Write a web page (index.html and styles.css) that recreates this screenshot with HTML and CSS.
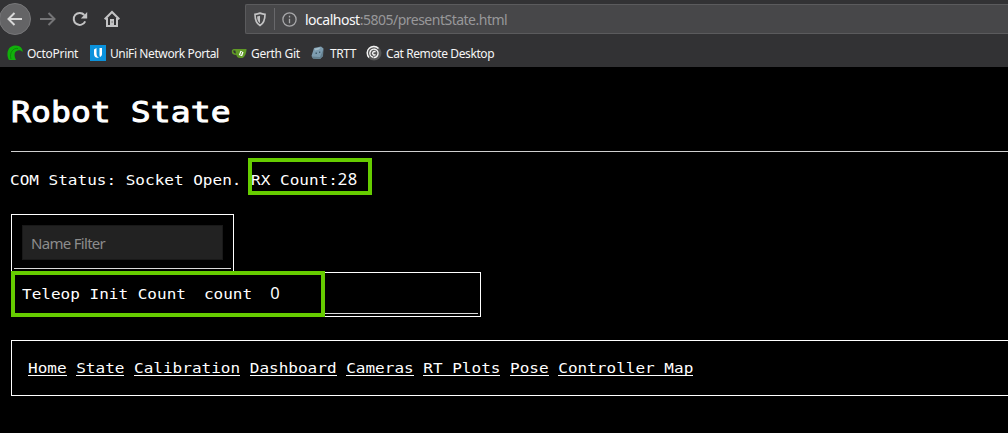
FILE: index.html
```html
<!DOCTYPE html>
<html lang="en">
<head>
<meta charset="utf-8">
<title>Robot State</title>
<link rel="stylesheet" href="styles.css">
</head>
<body>
<header class="browser">
  <div class="toolbar">
    <span class="back"><svg width="18" height="18" viewBox="0 0 18 18"><path d="M16 9H3M8.500 3 2.500 9l6 6"/></svg></span>
    <svg class="forward" width="18" height="18" viewBox="0 0 18 18"><path d="M1 9h14M9.500 3l6 6-6 6"/></svg>
    <svg class="reload" width="18" height="18" viewBox="0 0 18 18"><path d="M14.200 11.400A6 6 0 1 1 13.300 5"/><path class="solid" d="M16.200 2v6.400H9.800z"/></svg>
    <svg class="home" width="18" height="18" viewBox="0 0 18 18"><path d="M1.700 9.200 9 2l7.300 7.200M4 8v8h10V8"/><path class="solid" d="M7 9h4v6H7z"/><path class="knob" d="M8.600 11.500h1v1h-1z"/></svg>
    <div class="address">
      <svg class="shield" width="14" height="15" viewBox="0 0 14 15"><path d="M7 1.100c2 .7 3.500 1 5 1.200C12 8 10.700 11.500 7 13.500 3.300 11.500 2 8 2 2.300 3.500 2.100 5 1.800 7 1.100z"/><path class="solid" d="M7 3.700v7.500C4.900 9.700 4.200 7.600 4.100 4.400z"/></svg>
      <span class="divider"></span>
      <svg class="info" width="15" height="15" viewBox="0 0 15 15"><circle cx="7.500" cy="7.500" r="6.600"/><path d="M7.500 6.700v4.600M7.500 3.700v1.700"/></svg>
      <span class="url"><b>localhost</b>:5805/presentState.html</span>
    </div>
  </div>
  <nav class="bookmarks">
    <span class="mark octo"><svg width="16" height="16" viewBox="0 0 16 16"><path fill="#11b00b" d="M2 15C-1 10 0 1 8 .5c5-.3 8 3 7.600 6.500C14 5 11.500 4.700 9.500 6 7 7.600 7 11 9 15z"/><path fill="none" stroke="#0b8a08" d="M4 14C2 8 6 2.500 11 3.500"/></svg><span>OctoPrint</span></span>
    <span class="mark unifi"><svg width="16" height="16" viewBox="0 0 16 16"><path fill="#0b92dc" d="M0 0h16v16H0z"/><path fill="#fff" d="M4 4.500 6.500 3v5c0 3 1 4 2.500 4.500C6 13.500 4 11.500 4 9zM9.500 3H12v6c0 1.500-.7 2.500-2 2.900-.4-.6-.5-1.300-.5-2.200z"/></svg><span>UniFi Network Portal</span></span>
    <span class="mark gerth"><svg width="16" height="16" viewBox="0 0 16 16"><path fill="#609926" d="M4 4h11.500c0 4-1.500 8-4 9H8c-1.500-.5-2.200-1.500-2.700-3C2 10 .5 8.500.8 6 1 4.500 2 4 4 4z"/><path fill="#323234" d="M2.300 5.500h2l.7 3C3 8.300 2 7 2.300 5.500z"/><path fill="#fff" d="m9.500 5.800 3 1.500-1.400 4-3.300-1.300z"/><path stroke="#609926" d="m10.700 7-1 3"/></svg><span>Gerth Git</span></span>
    <span class="mark trtt"><svg width="16" height="16" viewBox="0 0 16 16"><path fill="#7d9caf" d="m4 3 7-1.500 2.500 2L13 11l-3 3-7-.5L1.500 11z"/><path fill="#64808f" d="M2 11.500 10 12l3-7v6l-3 3-7-.5z"/><path fill="#a3bdca" d="m4.500 3.500 6-1-1.500 2-4 1z"/><path fill="#415d6c" d="M5.500 7.500H7V9H5.500zM9 6.500h1.300V8H9z"/></svg><span>TRTT</span></span>
    <span class="mark cat"><svg width="16" height="16" viewBox="0 0 16 16"><circle cx="8" cy="8" r="7.500" fill="#555"/><g fill="none" stroke="#f4f4f4" stroke-width="1.400"><path d="M3 12.500A6.300 6.300 0 1 1 12.500 3.500"/><path d="M7 12.300A4.100 4.100 0 1 1 12 9c-.7 2.800-2.500 3.800-4.500 3.500"/><path d="M9.500 7A1.700 1.700 0 1 0 9.500 9.500"/></g></svg><span>Cat Remote Desktop</span></span>
  </nav>
</header>
<main class="page">
  <h1 class="title"><span class="wide">Robot State</span></h1>
  <p class="status"><span class="wide">COM Status: Socket Open. RX Count:</span><span class="number">28</span></p>
  <section class="filter"><div class="line"><input class="name" type="text" placeholder="Name Filter"></div></section>
  <section class="signal"><div class="line"><span class="wide">Teleop Init Count</span><span class="wide unit">count</span><span class="number">0</span></div></section>
  <nav class="links"><a href="#"><span class="wide">Home</span></a><a href="#"><span class="wide">State</span></a><a href="#"><span class="wide">Calibration</span></a><a href="#"><span class="wide">Dashboard</span></a><a href="#"><span class="wide">Cameras</span></a><a href="#"><span class="wide">RT Plots</span></a><a href="#"><span class="wide">Pose</span></a><a href="#"><span class="wide">Controller Map</span></a></nav>
</main>
<div class="highlight rx"></div>
<div class="highlight teleop"></div>
</body>
</html>
```
FILE: styles.css
```css
* { box-sizing: border-box; }
body { margin: 0; background: #000; color: #fff; width: 1008px; height: 433px; overflow: hidden; position: relative; }
svg { display: block; flex: none; }
.browser { height: 67px; background: #323234; font-family: "Noto Sans", sans-serif; }
.toolbar { height: 38px; display: flex; align-items: center; }
.toolbar svg { fill: none; stroke: #c3c3c4; stroke-width: 2; }
.toolbar .solid { fill: #c3c3c4; stroke: none; }
.toolbar .knob { fill: #323234; stroke: none; }
.back { width: 32px; height: 32px; margin-left: -1px; border: 1px solid #777779; border-radius: 50%; background: #646466; display: grid; place-items: center; }
.toolbar .back svg { stroke: #d8d8d8; }
.toolbar .forward { margin-left: 8px; stroke: #747476; }
.reload { margin-left: 14px; }
.home { margin-left: 14px; }
.address { margin-left: 124px; flex: 1; height: 30px; background: #474749; border: 1px solid #5b5b5d; border-right: 0; border-radius: 2px 0 0 2px; display: flex; align-items: center; }
.address .shield { margin-left: 7px; stroke-width: 1.7; }
.divider { width: 1px; height: 22px; margin-left: 7px; background: #68686b; }
.address .info { margin-left: 7px; stroke: #a8a8aa; stroke-width: 1.3; }
.url { margin-left: 8px; padding-top: 2px; font-size: 14px; line-height: 20px; color: #98989a; white-space: nowrap; letter-spacing: -.5px; }
.url b { font-weight: 400; color: #f9f9fa; }
.bookmarks { height: 29px; display: flex; padding-left: 7px; font-size: 12px; color: #f5f5f6; }
.mark { display: flex; align-items: center; gap: 4px; height: 30px; white-space: nowrap; letter-spacing: -.4px; }
.octo { width: 83px; letter-spacing: -.3px; }
.unifi { width: 141px; }
.gerth { width: 79px; letter-spacing: -.3px; }
.trtt { width: 56px; }
.page { padding-left: 11px; font: 16px/20px "DejaVu Sans Mono", monospace; letter-spacing: .01px; }
.wide { display: inline-block; transform: scaleY(.9); transform-origin: 0 15px; }
.title { margin: 0; height: 85px; padding: 24px 0 0 0; border-bottom: 1px solid #d0d0d0; font-size: 33px; font-weight: 400; line-height: 40px; letter-spacing: .1px; -webkit-text-stroke: 1.1px #fff; }
.title .wide { transform: scaleY(.85); transform-origin: 0 31px; }
.status { display: flex; margin: 18px 0 24px -1px; height: 20px; white-space: pre; }
.number { font-family: "Noto Sans", sans-serif; font-size: 16.5px; line-height: 18px; letter-spacing: .5px; }
.filter { width: 223px; height: 58px; padding: 2px; border: 1px solid #fff; border-bottom: 0; }
.filter .line { height: 52px; padding: 8px 8px 0; border-bottom: 1px solid #d8d8d8; }
.name { display: block; width: 201px; height: 35px; margin: 0; padding: 0 8px; border: 1px solid #191919; background: #222; color: #fff; font: 15px "Noto Sans", sans-serif; letter-spacing: -.7px; }
.name::placeholder { color: #8c8c8c; opacity: 1; }
.signal { width: 470px; height: 45px; padding: 2px; border: 1px solid #fff; }
.signal .line { height: 39px; padding: 9px 8px 0; border-bottom: 1px solid #d8d8d8; display: flex; }
.unit { margin: 0 18px; }
.links { margin-top: 23px; height: 56px; padding: 17px 0 0 16px; border: 1px solid #fff; border-right: 0; display: flex; gap: 9.64px; white-space: nowrap; }
.links a { color: #fff; text-decoration: none; height: 18px; border-bottom: 1px solid #fff; }
.highlight { position: absolute; border: 4px solid #66cc00; }
.rx { left: 248px; top: 158px; width: 124px; height: 37px; }
.teleop { left: 11px; top: 271px; width: 314px; height: 46px; }
```
